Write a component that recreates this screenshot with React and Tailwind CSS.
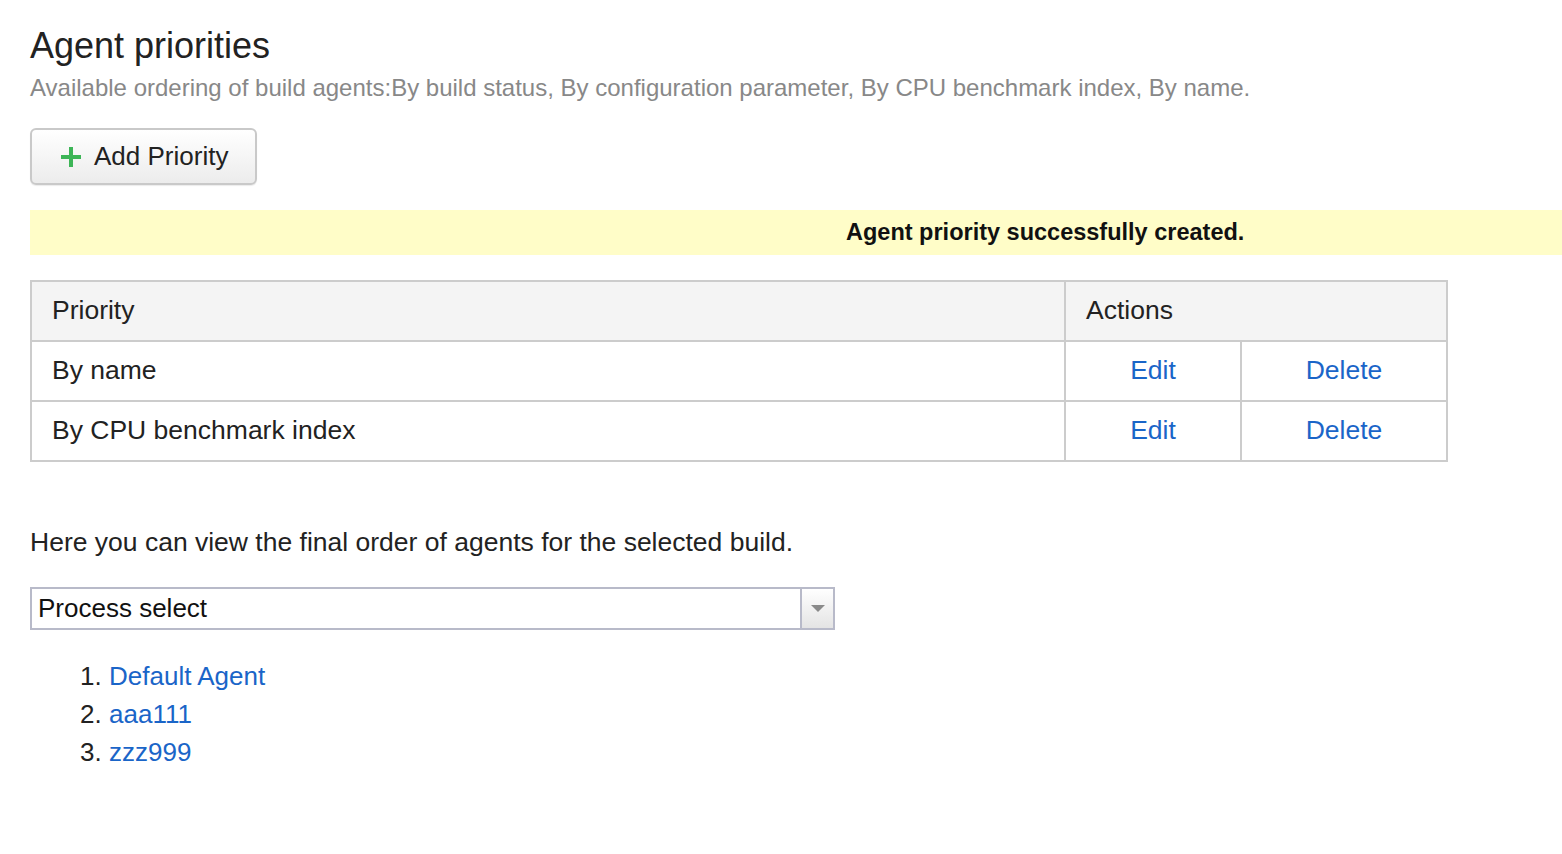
import React from 'react';

const priorities = [
  { id: 1, name: 'By name' },
  { id: 2, name: 'By CPU benchmark index' },
];

const agents = ['Default Agent', 'aaa111', 'zzz999'];

const App = () => {
  return (
    <div className="min-h-screen bg-white pl-[30px] pt-[26px] text-[#222] font-['Liberation_Sans',Arial,sans-serif]">
      {/* Header */}
      <h1 className="text-[36px] leading-[40px] font-normal">Agent priorities</h1>
      <p className="mt-[8px] text-[24px] leading-[28px] text-[#888]">
        Available ordering of build agents:By build status, By configuration parameter, By CPU benchmark index, By name.
      </p>

      {/* Add button */}
      <button className="mt-[26px] flex h-[57px] w-[227px] items-center gap-[12px] rounded-[6px] border-2 border-[#c9c9c9] bg-gradient-to-b from-white to-[#ececec] pl-[28px] text-[26px] text-[#222] shadow-[0_1px_1px_rgba(0,0,0,0.08)]">
        <svg width="22" height="22" viewBox="0 0 22 22" className="shrink-0">
          <rect x="9" y="1" width="4" height="20" fill="#3db557" />
          <rect x="1" y="9" width="20" height="4" fill="#3db557" />
        </svg>
        <span>Add Priority</span>
      </button>

      {/* Success message */}
      <div className="mt-[25px] flex h-[45px] items-center bg-[#fffdc8] pl-[816px]">
        <span className="text-[23.5px] font-bold text-[#111]">Agent priority successfully created.</span>
      </div>

      {/* Priorities table */}
      <table className="mt-[25px] w-[1417px] table-fixed border-collapse text-[26.5px]">
        <colgroup>
          <col className="w-[1034px]" />
          <col className="w-[176px]" />
          <col className="w-[206px]" />
        </colgroup>
        <thead>
          <tr className="h-[60px] bg-[#f4f4f4]">
            <th className="border-2 border-[#cccccc] pl-[20px] text-left font-normal">Priority</th>
            <th colSpan={2} className="border-2 border-[#cccccc] pl-[20px] text-left font-normal">Actions</th>
          </tr>
        </thead>
        <tbody>
          {priorities.map(p => (
            <tr key={p.id} className="h-[60px]">
              <td className="border-2 border-[#cccccc] pl-[20px]">{p.name}</td>
              <td className="border-2 border-[#cccccc] text-center text-[#1a65c8]">Edit</td>
              <td className="border-2 border-[#cccccc] text-center text-[#1a65c8]">Delete</td>
            </tr>
          ))}
        </tbody>
      </table>

      {/* Final order */}
      <p className="mt-[64px] text-[26.5px] leading-[32px]">Here you can view the final order of agents for the selected build.</p>

      <div className="mt-[29px] flex h-[43px] w-[805px] border-2 border-[#b8bac9] bg-white">
        <div className="flex flex-1 items-center pl-[6px] text-[26px] text-[#111]">Process select</div>
        <div className="flex w-[33px] items-center justify-center border-l-2 border-[#b8bac9] bg-gradient-to-b from-white to-[#e4e4e4]">
          <svg width="16" height="9" viewBox="0 0 16 9">
            <path d="M1 1 L15 1 L8 8 Z" fill="#8a8a8a" />
          </svg>
        </div>
      </div>

      <ol className="mt-[27px] list-decimal pl-[79px] text-[26px] leading-[38px]">
        {agents.map(a => (
          <li key={a}>
            <span className="text-[#1a65c8]">{a}</span>
          </li>
        ))}
      </ol>
    </div>
  );
};

export default App;
